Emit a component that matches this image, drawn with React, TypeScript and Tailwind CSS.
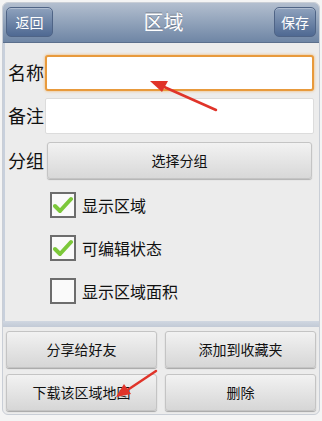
export default function App() {
  const font = { fontFamily: '"Noto Sans CJK SC", "Noto Sans", sans-serif' };
  return (
    <div className="relative h-[421px] w-[322px] overflow-hidden bg-[#f4f4f4] p-[2px]" style={font}>
      <div className="flex h-[413px] flex-col overflow-hidden rounded-[6px] border border-[#c9ced6] bg-[#ececec]">
        {/* Header */}
        <div className="flex h-[40px] items-center justify-between bg-gradient-to-b from-[#b3bfcf] to-[#6f86a5] px-[3px] border-b border-[#5b6f8c]">
          <button className="flex h-[30px] w-[47px] items-center justify-center rounded-[5px] border border-[#4f6486] bg-gradient-to-b from-[#8fa2bd] to-[#4f6992] text-[14px] text-white shadow-[inset_0_1px_0_rgba(255,255,255,0.3)]">
            返回
          </button>
          <span className="text-[20px] text-white [text-shadow:0_-1px_0_rgba(0,0,0,0.3)]">区域</span>
          <button className="flex h-[30px] w-[42px] items-center justify-center rounded-[5px] border border-[#4f6486] bg-gradient-to-b from-[#8fa2bd] to-[#4f6992] text-[14px] text-white shadow-[inset_0_1px_0_rgba(255,255,255,0.3)]">
            保存
          </button>
        </div>

        {/* Form */}
        <div className="flex h-[280px] flex-col border-l-[2px] border-[#c8d0dc] pl-[3px] pr-[5px] pt-[12px]">
          <div className="flex items-center">
            <span className="w-[37px] text-[18px] text-[#111]">名称</span>
            <div className="h-[36px] flex-1 rounded-[3px] border-[2px] border-[#e89a3c] bg-white shadow-[0_0_3px_#f0b060]" />
          </div>
          <div className="mt-[7px] flex items-center">
            <span className="w-[37px] text-[18px] text-[#111]">备注</span>
            <div className="h-[36px] flex-1 rounded-[2px] border border-[#dcdcdc] bg-white" />
          </div>
          <div className="mt-[8px] flex items-center">
            <span className="w-[39px] text-[18px] text-[#111]">分组</span>
            <button className="mr-[2px] h-[37px] flex-1 rounded-[3px] border border-[#c4c4c4] bg-gradient-to-b from-[#f2f2f2] to-[#d8d8d8] text-[14px] text-[#111] shadow-[0_1px_1px_rgba(0,0,0,0.25)]">
              选择分组
            </button>
          </div>

          <div className="mt-[13px] flex flex-col gap-[17px] pl-[42px]">
            <Check checked label="显示区域" />
            <Check checked label="可编辑状态" />
            <Check label="显示区域面积" />
          </div>
        </div>

        {/* Separator */}
        <div className="h-[6px] bg-gradient-to-b from-[#d0d7e1] to-[#c2cad6]" />

        {/* Action buttons */}
        <div className="grid flex-1 grid-cols-2 gap-x-[8px] gap-y-[6px] px-[3px] pt-[4px] pb-[3px]">
          <Btn>分享给好友</Btn>
          <Btn>添加到收藏夹</Btn>
          <Btn>下载该区域地图</Btn>
          <Btn>删除</Btn>
        </div>
      </div>

      {/* Annotation arrows */}
      <svg className="pointer-events-none absolute left-0 top-0" width="322" height="421">
        <line x1="216" y1="110" x2="162" y2="86" stroke="#e0342a" strokeWidth="2.5" strokeLinecap="round" />
        <polygon points="150,81 168,81 162,92" fill="#e0342a" />
        <line x1="156" y1="371" x2="126" y2="391" stroke="#e0342a" strokeWidth="2.5" strokeLinecap="round" />
        <polygon points="116,397 124,384 131,394" fill="#e0342a" />
      </svg>
    </div>
  );
}

function Check({ label, checked }: { label: string; checked?: boolean }) {
  return (
    <div className="flex items-center gap-[6px]">
      <div className="flex h-[26px] w-[26px] items-center justify-center border-[2px] border-[#6d6d6d] bg-[#fafafa]">
        {checked && (
          <svg width="20" height="18" viewBox="0 0 20 18">
            <path d="M2 10 L7 15 L18 3" fill="none" stroke="#7cc83a" strokeWidth="4" strokeLinecap="round" strokeLinejoin="round" />
          </svg>
        )}
      </div>
      <span className="text-[16px] text-[#111]">{label}</span>
    </div>
  );
}

function Btn({ children }: { children: React.ReactNode }) {
  return (
    <button className="h-[37px] rounded-[3px] border border-[#c4c4c4] bg-gradient-to-b from-[#f2f2f2] to-[#d6d6d6] text-[14px] text-[#111] shadow-[0_1px_1px_rgba(0,0,0,0.3)]">
      {children}
    </button>
  );
}
